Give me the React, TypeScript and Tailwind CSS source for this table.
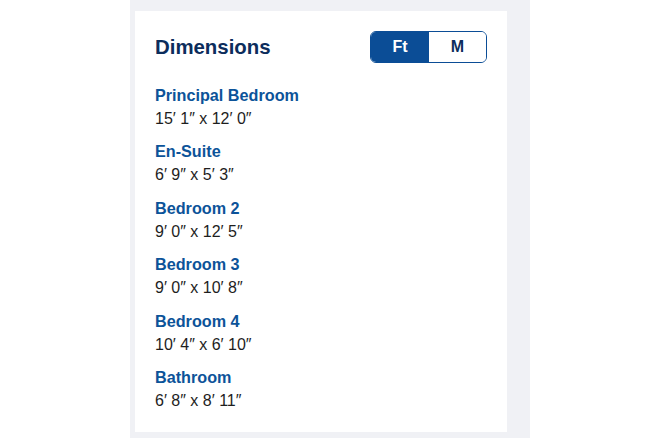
import React from "react";

const rooms = [
  { name: "Principal Bedroom", size: "15′ 1″ x 12′ 0″" },
  { name: "En-Suite", size: "6′ 9″ x 5′ 3″" },
  { name: "Bedroom 2", size: "9′ 0″ x 12′ 5″" },
  { name: "Bedroom 3", size: "9′ 0″ x 10′ 8″" },
  { name: "Bedroom 4", size: "10′ 4″ x 6′ 10″" },
  { name: "Bathroom", size: "6′ 8″ x 8′ 11″" },
];

export default function App() {
  return (
    <div className="h-[438px] w-[659px] overflow-hidden bg-white font-['Liberation_Sans',Arial,sans-serif]">
      <div className="ml-[130px] h-full w-[400px] bg-[#f0f1f5] pb-[6px] pl-[5px] pr-[23px] pt-[11px]">
        <div className="h-[421px] bg-white px-[20px] pt-[20px]">
          <header className="flex h-[32px] items-center justify-between">
            <h1 className="text-[20.4px] font-bold text-[#0c2d5c]">Dimensions</h1>
            <div className="flex h-[32px] w-[117px] overflow-hidden rounded-[6px] border-[1.5px] border-[#0b4d96]">
              <button className="flex w-[58px] items-center justify-center bg-[#0b4d96] text-[16px] font-bold text-white">
                Ft
              </button>
              <button className="flex flex-1 items-center justify-center bg-white text-[16px] font-bold text-[#0c2d5c]">
                M
              </button>
            </div>
          </header>

          <div className="mt-[20.5px] flex flex-col gap-[10.6px]">
            {rooms.map((room) => (
              <div key={room.name}>
                <div className="text-[16.2px] font-bold leading-[23px] text-[#0c5399]">{room.name}</div>
                <div className="text-[16px] leading-[23px] text-[#1e1e1e]">{room.size}</div>
              </div>
            ))}
          </div>
        </div>
      </div>
    </div>
  );
}
